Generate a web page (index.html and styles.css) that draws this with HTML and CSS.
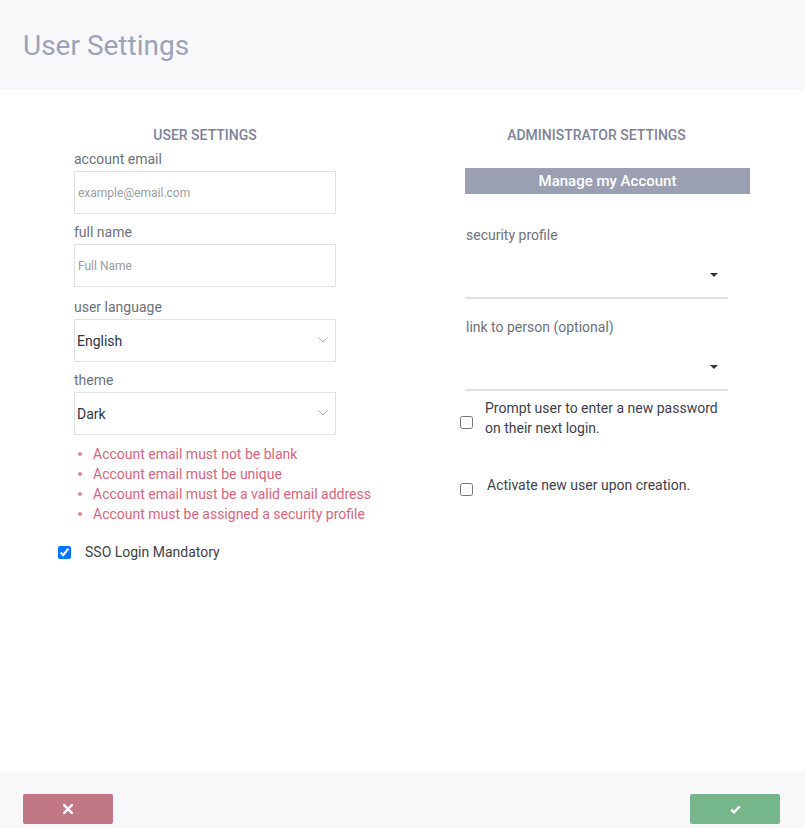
FILE: index.html
```html
<!DOCTYPE html>
<html lang="en">
<head>
<meta charset="utf-8">
<title>User Settings</title>
<link rel="stylesheet" href="styles.css">
</head>
<body>
<div class="page">
  <header class="top">
    <h1 class="title">User Settings</h1>
  </header>
  <main class="content">
    <section class="col col-left">
      <h2 class="sec-title">USER SETTINGS</h2>
      <div class="field">
        <label class="lbl">account email</label>
        <input class="txt" type="text" placeholder="example@email.com">
      </div>
      <div class="field">
        <label class="lbl">full name</label>
        <input class="txt" type="text" placeholder="Full Name">
      </div>
      <div class="field field-spaced">
        <label class="lbl">user language</label>
        <div class="sel-wrap">
          <select class="sel"><option>English</option></select>
          <svg class="chev" width="10" height="6" viewBox="0 0 10 6"><polyline points="0.5,0.5 5,5 9.5,0.5" fill="none" stroke="#a9acb4" stroke-width="1"/></svg>
        </div>
      </div>
      <div class="field">
        <label class="lbl">theme</label>
        <div class="sel-wrap">
          <select class="sel"><option>Dark</option></select>
          <svg class="chev" width="10" height="6" viewBox="0 0 10 6"><polyline points="0.5,0.5 5,5 9.5,0.5" fill="none" stroke="#a9acb4" stroke-width="1"/></svg>
        </div>
      </div>
      <ul class="errors">
        <li>Account email must not be blank</li>
        <li>Account email must be unique</li>
        <li>Account email must be a valid email address</li>
        <li>Account must be assigned a security profile</li>
      </ul>
      <label class="check-row sso">
        <input class="cb" type="checkbox" checked>
        <span>SSO Login Mandatory</span>
      </label>
    </section>
    <section class="col col-right">
      <h2 class="sec-title">ADMINISTRATOR SETTINGS</h2>
      <button class="manage" type="button">Manage my Account</button>
      <label class="lbl lbl-r first">security profile</label>
      <div class="dd"><span class="caret"></span></div>
      <label class="lbl lbl-r second">link to person (optional)</label>
      <div class="dd"><span class="caret"></span></div>
      <label class="check-row prompt">
        <input class="cb" type="checkbox">
        <span class="wrap-text">Prompt user to enter a new password on their next login.</span>
      </label>
      <label class="check-row activate">
        <input class="cb" type="checkbox">
        <span>Activate new user upon creation.</span>
      </label>
    </section>
  </main>
  <footer class="bottom">
    <button class="btn btn-cancel" type="button" aria-label="Cancel">
      <svg width="10" height="10" viewBox="0 0 10 10"><path d="M1.2 1.2 L8.8 8.8 M8.8 1.2 L1.2 8.8" stroke="#fff" stroke-width="2.4" stroke-linecap="square" fill="none"/></svg>
    </button>
    <button class="btn btn-ok" type="button" aria-label="Confirm">
      <svg width="11" height="9" viewBox="0 0 11 9"><path d="M1.2 4.6 L4 7.4 L9.8 1.2" stroke="#fff" stroke-width="2.3" fill="none"/></svg>
    </button>
  </footer>
</div>
</body>
</html>
```

FILE: styles.css
```css
html, body {
  margin: 0;
  padding: 0;
  height: 100%;
}
body {
  font-family: Roboto, "Liberation Sans", Arial, sans-serif;
  background: #ffffff;
  color: #444;
}
.page {
  display: flex;
  flex-direction: column;
  height: 828px;
  overflow: hidden;
}
.top {
  height: 90px;
  background: #f8f8fb;
  padding: 30px 0 0 23px;
  box-sizing: border-box;
  flex: none;
}
.title {
  margin: 0;
  font-size: 28px;
  line-height: 32px;
  font-weight: 400;
  color: #9ea2b7;
}
.content {
  flex: 1;
  display: grid;
  grid-template-columns: 262px 263px;
  column-gap: 129px;
  padding: 35px 0 0 74px;
  align-items: start;
}
.col {
  display: flex;
  flex-direction: column;
}
.sec-title {
  margin: 0;
  font-size: 14px;
  line-height: 20px;
  font-weight: 500;
  color: #7d8296;
  text-align: center;
  white-space: nowrap;
}
.col-left .sec-title { margin-bottom: 4px; }
.field {
  display: flex;
  flex-direction: column;
  margin-bottom: 8px;
}
.field-spaced { margin-top: 2px; }
.lbl {
  font-size: 14px;
  line-height: 20px;
  color: #6e717b;
  margin-bottom: 2px;
}
.txt {
  height: 43px;
  box-sizing: border-box;
  border: 1px solid #dfe2e8;
  border-radius: 0;
  padding: 0 0 0 3px;
  font-family: inherit;
  font-size: 12px;
  color: #333;
  outline: none;
  background: #fff;
  margin: 0;
}
.txt::placeholder { color: #9a9ba3; }
.sel-wrap {
  position: relative;
  height: 43px;
}
.sel {
  appearance: none;
  -webkit-appearance: none;
  width: 100%;
  height: 43px;
  box-sizing: border-box;
  border: 1px solid #dfe2e8;
  border-radius: 0;
  background: #fff;
  padding: 0 0 0 2px;
  font-family: inherit;
  font-size: 14px;
  color: #2f3441;
  margin: 0;
  outline: none;
}
.chev {
  position: absolute;
  right: 8px;
  top: 18px;
}
.errors {
  margin: 1px 0 0 0;
  padding: 0;
  list-style: none;
  font-size: 14px;
  line-height: 20px;
  color: #d4667d;
  white-space: nowrap;
}
.errors li {
  display: flex;
  align-items: center;
}
.errors li::before {
  content: "";
  width: 4px;
  height: 4px;
  border-radius: 50%;
  background: #dc8a9c;
  margin: 0 11px 0 4px;
  flex: none;
}
.check-row {
  display: flex;
  align-items: center;
  font-size: 14px;
  line-height: 20px;
  color: #3f4148;
}
.cb {
  width: 13px;
  height: 13px;
  margin: 0;
  flex: none;
}
.sso {
  margin: 18px 0 0 -16.5px;
}
.sso .cb { margin-right: 14.5px; }
.manage {
  margin: 23px 0 0 0;
  width: 285px;
  height: 26px;
  border: none;
  border-radius: 0;
  background: #9a9fb1;
  color: #ffffff;
  font-family: inherit;
  font-size: 15px;
  font-weight: 500;
  padding: 0;
  line-height: 26px;
}
.lbl-r { margin: 0; padding-left: 1px; }
.lbl-r.first { margin-top: 31px; }
.lbl-r.second { margin-top: 18px; }
.dd {
  height: 54px;
  box-sizing: border-box;
  border-bottom: 2px solid #e1e1e1;
  display: flex;
  justify-content: flex-end;
  align-items: flex-start;
  padding: 28px 10px 0 0;
}
.caret {
  width: 0;
  height: 0;
  border-left: 4px solid transparent;
  border-right: 4px solid transparent;
  border-top: 4px solid #333;
}
.prompt {
  margin: 7px 0 0 -5px;
  align-items: flex-start;
}
.prompt .cb { margin: 18px 12px 0 0; }
.wrap-text { width: 243px; }
.activate {
  margin: 37px 0 0 -5px;
  align-items: flex-start;
}
.activate .cb { margin: 7.5px 14px 0 0; }
.bottom {
  flex: none;
  height: 57px;
  background: #f8f8fb;
  display: flex;
  justify-content: space-between;
  align-items: flex-start;
  padding: 23px 25px 0 23px;
  box-sizing: border-box;
}
.btn {
  width: 90px;
  height: 30px;
  border: none;
  border-radius: 2px;
  padding: 0;
  display: flex;
  align-items: center;
  justify-content: center;
}
.btn-cancel { background: #c27787; }
.btn-ok { background: #75b68b; }
```
